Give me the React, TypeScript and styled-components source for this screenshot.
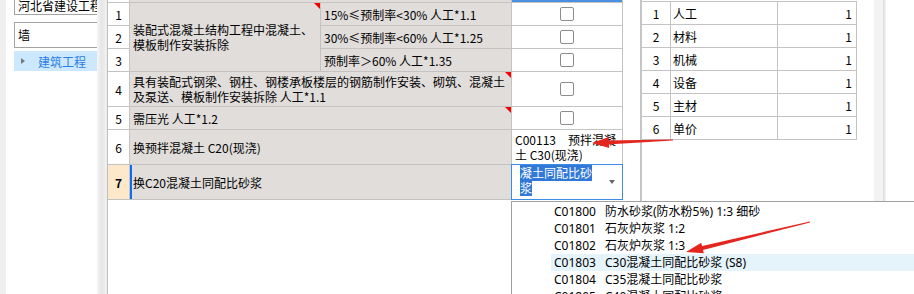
import React from "react";
import styled, { createGlobalStyle, css } from "styled-components";

const FONT = `"Noto Sans CJK SC", "Noto Sans", sans-serif`;

const GlobalStyle = createGlobalStyle`
  html, body {
    margin: 0;
    padding: 0;
    background: #fff;
  }
  body {
    font-family: ${FONT};
    overflow: hidden;
  }
`;

const Page = styled.div`
  position: relative;
  display: flex;
  width: 914px;
  height: 294px;
  overflow: hidden;
  font-family: ${FONT};
  font-size: 12px;
  color: #000;
  background: #fff;
`;

const Gutter = styled.div`
  width: 6px;
  flex: none;
  background: #f0f0f0;
`;

const Sidebar = styled.div`
  width: 91px;
  flex: none;
  box-sizing: border-box;
  padding-left: 8px;
  background: #fff;
  overflow: hidden;
`;

const Field = styled.div<{ $clipped?: boolean }>`
  width: 130px;
  height: 26px;
  box-sizing: border-box;
  border: 1px solid #a3a3a3;
  padding: 0 3px;
  line-height: 24px;
  white-space: nowrap;
  overflow: hidden;
  background: #fff;
  ${(p) =>
    p.$clipped &&
    css`
      margin-top: -11px;
      padding-top: 7px;
      line-height: 17px;
    `}
  & + & {
    margin-top: 7px;
  }
`;

const TreeRow = styled.div`
  margin-top: 3px;
  width: 130px;
  height: 20px;
  box-sizing: border-box;
  padding-left: 7px;
  display: flex;
  align-items: center;
  white-space: nowrap;
  background: #cce8ff;
  color: #2b7de1;
`;

const Caret = styled.span`
  width: 0;
  height: 0;
  margin-right: 13px;
  border-left: 4px solid #7a7a7a;
  border-top: 3.5px solid transparent;
  border-bottom: 3.5px solid transparent;
`;

const Shade = styled.div`
  width: 10px;
  flex: none;
  background: linear-gradient(to right, #f6f6f6 0%, #e6e6e6 45%, #f1f1f1 100%);
`;

const Main = styled.div`
  width: 533px;
  flex: none;
  box-sizing: border-box;
  border-left: 1px solid #bcbcbc;
  background: #fff;
`;

const Grid = styled.div`
  display: grid;
  width: max-content;
  grid-template-columns: 21px 190px 190px 110px;
  grid-template-rows: 2px 22px 22px 22px 34px 22px 34px 34px;
  gap: 1px;
  padding: 0 1px 1px 0;
  background: #c3c3c3;
`;

const NumCell = styled.div<{ $active?: boolean }>`
  display: flex;
  align-items: center;
  justify-content: center;
  background: ${(p) => (p.$active ? "#fee8cb" : "#fff")};
  font-weight: ${(p) => (p.$active ? 700 : 400)};
`;

const TextCell = styled.div<{
  $cols?: number;
  $rows?: number;
  $note?: boolean;
  $current?: boolean;
}>`
  position: relative;
  grid-column: span ${(p) => p.$cols ?? 1};
  grid-row: span ${(p) => p.$rows ?? 1};
  display: flex;
  align-items: center;
  padding: 0 3px;
  line-height: 15px;
  background: #e1dddb;
  overflow: hidden;
  ${(p) =>
    p.$note &&
    css`
      &::after {
        content: "";
        position: absolute;
        top: 0;
        right: 0;
        border-top: 6px solid #f20000;
        border-left: 6px solid transparent;
      }
    `}
  ${(p) =>
    p.$current &&
    css`
      &::before {
        content: "";
        position: absolute;
        top: 0;
        bottom: 0;
        left: 0;
        width: 2px;
        background: #0b6cf4;
      }
    `}
`;

const CheckCell = styled.div<{ $head?: boolean }>`
  display: flex;
  align-items: center;
  justify-content: center;
  background: ${(p) => (p.$head ? "#4a90e2" : "#fff")};
`;

const Box = styled.span`
  width: 14px;
  height: 14px;
  box-sizing: border-box;
  border: 1px solid #8c8c8c;
  border-radius: 2px;
  background: #fff;
`;

const ValueCell = styled.div`
  display: flex;
  align-items: center;
  padding: 0 3px;
  line-height: 15px;
  background: #fff;
`;

const SelectCell = styled.div`
  display: flex;
  align-items: center;
  padding: 0 7px 0 8px;
  background: #fff;
  outline: 1px solid #3a8ce6;
`;

const SelectText = styled.span`
  align-self: flex-start;
  width: 76px;
  line-height: 15px;
`;

const Mark = styled.span`
  background: #3178d7;
  color: #fff;
`;

const DropCaret = styled.span`
  margin-left: auto;
  width: 0;
  height: 0;
  border-top: 4px solid #666;
  border-left: 3.5px solid transparent;
  border-right: 3.5px solid transparent;
`;

const RightPanel = styled.div`
  flex: 1;
  display: flex;
  border-left: 2px solid #c5c5c5;
  background: #fff;
`;

const RefTable = styled.div`
  align-self: flex-start;
  display: grid;
  grid-template-columns: 28px 106px 78px;
  grid-auto-rows: 22px;
  gap: 1px;
  margin-top: 1px;
  padding: 1px 1px 1px 0;
  background: #c3c3c3;
`;

const RefCell = styled.div<{ $align?: "left" | "center" | "right" }>`
  display: flex;
  align-items: center;
  justify-content: ${(p) =>
    p.$align === "center" ? "center" : p.$align === "right" ? "flex-end" : "flex-start"};
  padding: ${(p) => (p.$align === "right" ? "0 4px 0 0" : p.$align === "center" ? "0" : "0 0 0 2px")};
  background: #fff;
`;

const Spacer = styled.div`
  width: 17px;
  flex: none;
`;

const ScrollStrip = styled.div`
  width: 9px;
  flex: none;
  background: #f3f3f3;
`;

const StripEdge = styled.div`
  width: 3px;
  flex: none;
  background: linear-gradient(to right, #dadada, #f6f6f6);
`;

const Dropdown = styled.div`
  position: absolute;
  left: 511px;
  top: 201px;
  width: 420px;
  height: 110px;
  box-sizing: border-box;
  padding-top: 1px;
  border-left: 1px solid #a0a0a0;
  border-top: 1px solid #a0a0a0;
  background: #fff;
  font-family: "Noto Sans", "Noto Sans CJK SC", sans-serif;
  font-size: 12px;
`;

const Option = styled.div<{ $hover?: boolean }>`
  display: flex;
  height: 17px;
  line-height: 17px;
  margin-left: 39px;
  padding-left: 3px;
  white-space: nowrap;
  background: ${(p) => (p.$hover ? "#e5f3fb" : "transparent")};
`;

const Code = styled.span`
  width: 51px;
  flex: none;
`;

const Overlay = styled.svg`
  position: absolute;
  left: 0;
  top: 0;
  pointer-events: none;
`;

const subRows = ["15%≤预制率<30% 人工*1.1", "30%≤预制率<60% 人工*1.25", "预制率＞60% 人工*1.35"];

const refRows = ["人工", "材料", "机械", "设备", "主材", "单价"];

const options = [
  { code: "C01800", name: "防水砂浆(防水粉5%) 1:3 细砂" },
  { code: "C01801", name: "石灰炉灰浆 1:2" },
  { code: "C01802", name: "石灰炉灰浆 1:3" },
  { code: "C01803", name: "C30混凝土同配比砂浆 (S8)", hover: true },
  { code: "C01804", name: "C35混凝土同配比砂浆" },
  { code: "C01805", name: "C40混凝土同配比砂浆" },
];

function Arrow({ from, to }: { from: [number, number]; to: [number, number] }) {
  const dx = to[0] - from[0];
  const dy = to[1] - from[1];
  const len = Math.hypot(dx, dy);
  const ux = dx / len;
  const uy = dy / len;
  const nx = -uy;
  const ny = ux;
  const head = 17;
  const bx = to[0] - ux * head;
  const by = to[1] - uy * head;
  const pt = (x: number, y: number) => `${x.toFixed(1)},${y.toFixed(1)}`;
  const shaft = [
    pt(from[0] + nx * 0.6, from[1] + ny * 0.6),
    pt(bx + 2 * ux + nx * 2, by + 2 * uy + ny * 2),
    pt(bx + 2 * ux - nx * 2, by + 2 * uy - ny * 2),
    pt(from[0] - nx * 0.6, from[1] - ny * 0.6),
  ].join(" ");
  const tip = [pt(to[0], to[1]), pt(bx + nx * 5.5, by + ny * 5.5), pt(bx - nx * 5.5, by - ny * 5.5)].join(" ");
  return (
    <g fill="#e5261f">
      <polygon points={shaft} />
      <polygon points={tip} />
    </g>
  );
}

export default function App() {
  return (
    <>
      <GlobalStyle />
      <Page>
        <Gutter />
        <Sidebar>
          <Field $clipped>河北省建设工程</Field>
          <Field>墙</Field>
          <TreeRow>
            <Caret />
            建筑工程
          </TreeRow>
        </Sidebar>
        <Shade />
        <Main>
          <Grid>
            <NumCell />
            <TextCell $cols={2} />
            <CheckCell $head />

            <NumCell>1</NumCell>
            <TextCell $rows={3} $note>
              装配式混凝土结构工程中混凝土、模板制作安装拆除
            </TextCell>
            <TextCell>{subRows[0]}</TextCell>
            <CheckCell>
              <Box />
            </CheckCell>

            <NumCell>2</NumCell>
            <TextCell>{subRows[1]}</TextCell>
            <CheckCell>
              <Box />
            </CheckCell>

            <NumCell>3</NumCell>
            <TextCell>{subRows[2]}</TextCell>
            <CheckCell>
              <Box />
            </CheckCell>

            <NumCell>4</NumCell>
            <TextCell $cols={2} $note>
              具有装配式钢梁、钢柱、钢楼承板楼层的钢筋制作安装、砌筑、混凝土及泵送、模板制作安装拆除 人工*1.1
            </TextCell>
            <CheckCell>
              <Box />
            </CheckCell>

            <NumCell>5</NumCell>
            <TextCell $cols={2} $note>
              需压光 人工*1.2
            </TextCell>
            <CheckCell>
              <Box />
            </CheckCell>

            <NumCell>6</NumCell>
            <TextCell $cols={2}>换预拌混凝土 C20(现浇)</TextCell>
            <ValueCell>C00113　预拌混凝土 C30(现浇)</ValueCell>

            <NumCell $active>7</NumCell>
            <TextCell $cols={2} $current>
              换C20混凝土同配比砂浆
            </TextCell>
            <SelectCell>
              <SelectText>
                <Mark>凝土同配比砂浆</Mark>
              </SelectText>
              <DropCaret />
            </SelectCell>
          </Grid>
        </Main>
        <RightPanel>
          <RefTable>
            {refRows.map((name, i) => (
              <React.Fragment key={name}>
                <RefCell $align="center">{i + 1}</RefCell>
                <RefCell>{name}</RefCell>
                <RefCell $align="right">1</RefCell>
              </React.Fragment>
            ))}
          </RefTable>
          <Spacer />
          <ScrollStrip />
          <StripEdge />
        </RightPanel>

        <Dropdown>
          {options.map((o) => (
            <Option key={o.code} $hover={o.hover}>
              <Code>{o.code}</Code>
              {o.name}
            </Option>
          ))}
        </Dropdown>

        <Overlay width={914} height={294} viewBox="0 0 914 294">
          <Arrow from={[673, 140]} to={[592, 143]} />
          <Arrow from={[810, 222]} to={[686, 252]} />
        </Overlay>
      </Page>
    </>
  );
}
